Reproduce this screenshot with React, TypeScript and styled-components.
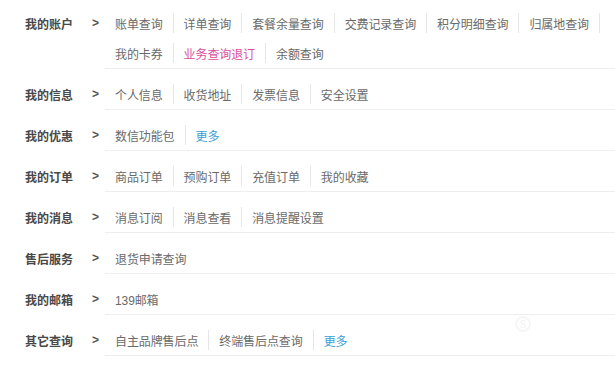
import React from "react";
import styled, { createGlobalStyle } from "styled-components";

const Global = createGlobalStyle`
  html, body { margin: 0; padding: 0; background: #fff; }
  body {
    font-family: "Liberation Sans", "Noto Sans CJK SC", sans-serif;
    font-size: 12px;
    color: #666;
    overflow: hidden;
  }
`;

const Page = styled.div`
  position: relative;
  width: 615px;
  height: 372px;
  overflow: hidden;
`;

const Row = styled.div`
  display: flex;
  align-items: flex-start;
`;

const Title = styled.div<{ $top: number }>`
  flex: 0 0 105px;
  box-sizing: border-box;
  display: flex;
  align-items: center;
  padding-left: 25px;
  padding-top: ${(p) => p.$top}px;
  height: ${(p) => p.$top + 30}px;
`;

const Label = styled.span`
  width: 67px;
  font-weight: bold;
  color: #484848;
`;

const Arrow = styled.span`
  color: #555;
  font-weight: bold;
  font-family: "Liberation Sans", sans-serif;
`;

const Content = styled.div<{ $top: number }>`
  flex: 1;
  display: flex;
  flex-wrap: wrap;
  padding-top: ${(p) => p.$top}px;
  border-bottom: 1px solid #eeeeee;
`;

const Item = styled.a<{ $tone?: "pink" | "blue" }>`
  display: flex;
  align-items: center;
  height: 30px;
  padding: 0 10px;
  text-decoration: none;
  cursor: pointer;
  letter-spacing: -0.1px;
  color: ${(p) => (p.$tone === "pink" ? "#d9509f" : p.$tone === "blue" ? "#3a9fd6" : "#6a6a6a")};
`;

const Sep = styled.span`
  align-self: center;
  width: 1px;
  height: 20px;
  background: #e6e6e6;
`;

const Group = styled.span`
  display: flex;
  align-items: center;
`;

const Watermark = styled.div`
  position: absolute;
  left: 515px;
  top: 316px;
  display: flex;
  align-items: center;
  pointer-events: none;
`;

const WmCircle = styled.span`
  width: 12px;
  height: 12px;
  border: 2px solid #f6f6f6;
  border-radius: 50%;
  display: flex;
  align-items: center;
  justify-content: center;
  font-weight: bold;
  font-size: 10px;
  color: #f6f6f6;
`;

type Link = { t: string; tone?: "pink" | "blue" };

const data: { label: string; links: Link[] }[] = [
  {
    label: "我的账户",
    links: [
      { t: "账单查询" },
      { t: "详单查询" },
      { t: "套餐余量查询" },
      { t: "交费记录查询" },
      { t: "积分明细查询" },
      { t: "归属地查询" },
      { t: "我的卡券" },
      { t: "业务查询退订", tone: "pink" },
      { t: "余额查询" },
    ],
  },
  { label: "我的信息", links: [{ t: "个人信息" }, { t: "收货地址" }, { t: "发票信息" }, { t: "安全设置" }] },
  { label: "我的优惠", links: [{ t: "数信功能包" }, { t: "更多", tone: "blue" }] },
  { label: "我的订单", links: [{ t: "商品订单" }, { t: "预购订单" }, { t: "充值订单" }, { t: "我的收藏" }] },
  { label: "我的消息", links: [{ t: "消息订阅" }, { t: "消息查看" }, { t: "消息提醒设置" }] },
  { label: "售后服务", links: [{ t: "退货申请查询" }] },
  { label: "我的邮箱", links: [{ t: "139邮箱" }] },
  { label: "其它查询", links: [{ t: "自主品牌售后点" }, { t: "终端售后点查询" }, { t: "更多", tone: "blue" }] },
];

export default function App() {
  return (
    <Page>
      <Global />
      {data.map((row, ri) => {
        const top = ri === 0 ? 8 : 10;
        return (
          <Row key={row.label}>
            <Title $top={top}>
              <Label>{row.label}</Label>
              <Arrow>&gt;</Arrow>
            </Title>
            <Content $top={top}>
              {row.links.map((l, i) => (
                <Group key={l.t}>
                  <Item $tone={l.tone}>{l.t}</Item>
                  {i < row.links.length - 1 && <Sep />}
                </Group>
              ))}
            </Content>
          </Row>
        );
      })}
      <Watermark>
        <WmCircle>S</WmCircle>
      </Watermark>
    </Page>
  );
}
